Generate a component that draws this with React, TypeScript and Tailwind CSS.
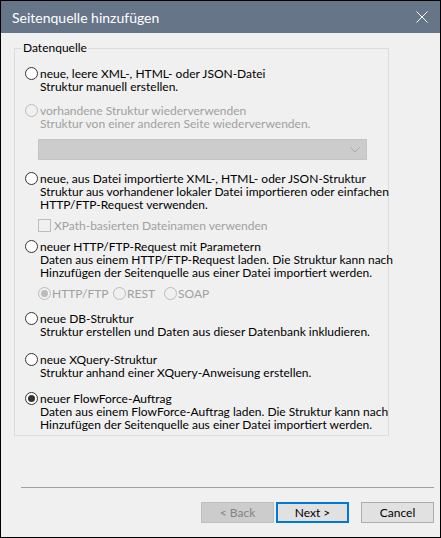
import React from "react";

const font = { fontFamily: 'Lato, "Liberation Sans", Arial, sans-serif' };

function Radio({ checked = false, disabled = false }: { checked?: boolean; disabled?: boolean }) {
  return (
    <span
      className={`flex h-[13px] w-[13px] shrink-0 items-center justify-center rounded-full border ${
        disabled ? "border-[#bcbcbc] bg-[#f0f0f0]" : "border-[#333333] bg-white"
      }`}
    >
      {checked && (
        <span className={`h-[7px] w-[7px] rounded-full ${disabled ? "bg-[#bcbcbc]" : "bg-[#333333]"}`} />
      )}
    </span>
  );
}

function Option({
  label,
  lines,
  disabled = false,
  checked = false,
  className = "",
}: {
  label: string;
  lines: string[];
  disabled?: boolean;
  checked?: boolean;
  className?: string;
}) {
  return (
    <div className={`flex items-start ${className}`}>
      <Radio checked={checked} disabled={disabled} />
      <div className={`ml-[2px] whitespace-nowrap leading-[13px] ${disabled ? "text-[#a0a0a0]" : "text-black"}`}>
        <div>{label}</div>
        {lines.map((l, i) => (
          <div key={i}>{l}</div>
        ))}
      </div>
    </div>
  );
}

function Button({ label, kind }: { label: string; kind: "disabled" | "default" | "normal" }) {
  const styles =
    kind === "disabled"
      ? "border border-[#bfbfbf] bg-[#cccccc] text-[#838383]"
      : kind === "default"
      ? "border-2 border-[#0078d7] bg-[#e1e1e1] text-black"
      : "border border-[#adadad] bg-[#e1e1e1] text-black";
  return (
    <div className={`flex h-[21px] w-[73px] items-center justify-center text-[12px] ${styles}`}>{label}</div>
  );
}

export default function App() {
  return (
    <div className="h-[538px] w-[441px] overflow-hidden border border-black bg-[#f0f0f0] text-[12px]" style={font}>
      <div className="flex h-[32px] items-center justify-between bg-[#677589] pl-[11px] pr-[11px]">
        <span className="text-[14px] text-white">Seitenquelle hinzufügen</span>
        <svg width="12" height="12" viewBox="0 0 12 12" className="mr-[1px]">
          <path d="M0.5 0.5 L11.5 11.5 M11.5 0.5 L0.5 11.5" stroke="#ffffff" strokeWidth="1" fill="none" />
        </svg>
      </div>

      <div className="pl-[13px]">
        <div className="relative mt-[15px] w-[375px] border border-[#dcdcdc] pb-[4px] pl-[10px] pt-[18px]">
          <span className="absolute -top-[8px] left-[7px] bg-[#f0f0f0] px-[1px] leading-[14px]">Datenquelle</span>

          <Option label="neue, leere XML-, HTML- oder JSON-Datei" lines={["Struktur manuell erstellen."]} />
          <Option
            className="mt-[11px]"
            disabled
            label="vorhandene Struktur wiederverwenden"
            lines={["Struktur von einer anderen Seite wiederverwenden."]}
          />
          <div className="ml-[13px] mt-[9px] flex h-[21px] w-[329px] items-center justify-end border border-[#c4c4c4] bg-[#cccccc] pr-[6px]">
            <svg width="10" height="6" viewBox="0 0 10 6">
              <path d="M0.5 0.5 L5 5 L9.5 0.5" stroke="#a8a8a8" strokeWidth="1" fill="none" />
            </svg>
          </div>
          <Option
            className="mt-[12px]"
            label="neue, aus Datei importierte XML-, HTML- oder JSON-Struktur"
            lines={[
              "Struktur aus vorhandener lokaler Datei importieren oder einfachen",
              "HTTP/FTP-Request verwenden.",
            ]}
          />
          <div className="ml-[13px] mt-[8px] flex items-center whitespace-nowrap leading-[13px] text-[#a0a0a0]">
            <span className="h-[13px] w-[13px] border border-[#bcbcbc] bg-[#f0f0f0]" />
            <span className="ml-[3px]">XPath-basierten Dateinamen verwenden</span>
          </div>
          <Option
            className="mt-[8px]"
            label="neuer HTTP/FTP-Request mit Parametern"
            lines={[
              "Daten aus einem HTTP/FTP-Request laden. Die Struktur kann nach",
              "Hinzufügen der Seitenquelle aus einer Datei importiert werden.",
            ]}
          />
          <div className="ml-[13px] mt-[8px] flex items-center whitespace-nowrap leading-[13px] text-[#a0a0a0]">
            <Radio checked disabled />
            <span className="ml-[1px] w-[61px]">HTTP/FTP</span>
            <Radio disabled />
            <span className="ml-[1px] w-[37px]">REST</span>
            <Radio disabled />
            <span className="ml-[1px]">SOAP</span>
          </div>
          <Option
            className="mt-[12px]"
            label="neue DB-Struktur"
            lines={["Struktur erstellen und Daten aus dieser Datenbank inkludieren."]}
          />
          <Option
            className="mt-[15px]"
            label="neue XQuery-Struktur"
            lines={["Struktur anhand einer XQuery-Anweisung erstellen."]}
          />
          <Option
            className="mt-[13px]"
            checked
            label="neuer FlowForce-Auftrag"
            lines={[
              "Daten aus einem FlowForce-Auftrag laden. Die Struktur kann nach",
              "Hinzufügen der Seitenquelle aus einer Datei importiert werden.",
            ]}
          />
        </div>
      </div>

      <div className="ml-[20px] mt-[51px] h-px w-[413px] bg-[#a0a0a0]" />

      <div className="mt-[14px] flex pl-[200px]">
        <Button label="< Back" kind="disabled" />
        <div className="ml-[2px]">
          <Button label="Next >" kind="default" />
        </div>
        <div className="ml-[12px]">
          <Button label="Cancel" kind="normal" />
        </div>
      </div>
    </div>
  );
}
